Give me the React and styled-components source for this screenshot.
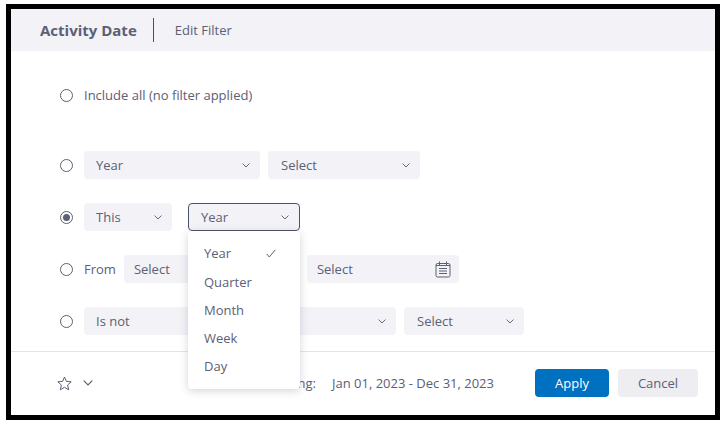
import React from "react";
import styled, { createGlobalStyle } from "styled-components";

const GlobalStyle = createGlobalStyle`
  html, body {
    margin: 0;
    padding: 0;
    background: #fff;
  }
  * {
    box-sizing: border-box;
  }
`;

const Frame = styled.div`
  position: relative;
  width: 714px;
  height: 416px;
  margin: 4px 0 0 6px;
  border: 5px solid #000;
  background: #fff;
  font-family: "Open Sans", "Noto Sans", sans-serif;
  font-size: 13px;
  color: #5c6075;
`;

const Header = styled.div`
  display: flex;
  align-items: center;
  height: 42px;
  padding-left: 29px;
  background: #f2f2f7;
`;

const Title = styled.div`
  font-size: 15px;
  font-weight: 700;
  padding-right: 16px;
  border-right: 1px solid #4a4e63;
  height: 24px;
  line-height: 24px;
`;

const SubTitle = styled.div`
  font-size: 13px;
  margin-left: 21px;
`;

const Body = styled.div`
  height: 301px;
  padding: 30px 0 0 49px;
  border-bottom: 1px solid #e4e4e8;
  display: flex;
  flex-direction: column;
  gap: 24px;
`;

const Row = styled.div`
  display: flex;
  align-items: center;
  height: 28px;
  gap: ${(p) => p.$gap || 8}px;
  margin-bottom: ${(p) => p.$after || 0}px;
`;

const Radio = styled.span`
  display: flex;
  align-items: center;
  justify-content: center;
  width: 13px;
  height: 13px;
  margin-right: 3px;
  border: 1px solid #5c6075;
  border-radius: 50%;
  background: #fff;
  flex: none;

  &::after {
    content: "";
    display: ${(p) => (p.$on ? "block" : "none")};
    width: 7px;
    height: 7px;
    border-radius: 50%;
    background: #5c6075;
  }
`;

const Label = styled.span`
  white-space: nowrap;
`;

const SelectBox = styled.div`
  display: flex;
  align-items: center;
  justify-content: space-between;
  width: ${(p) => p.$w}px;
  height: 28px;
  padding: 0 ${(p) => p.$right || 10}px 0 ${(p) => p.$left || 12}px;
  background: #f2f2f7;
  border-radius: 4px;
  border: ${(p) => (p.$open ? "1px solid #4f5368" : "none")};
  flex: none;
`;

const Menu = styled.ul`
  position: absolute;
  left: 177px;
  top: 222px;
  width: 112px;
  height: 158px;
  margin: 0;
  padding: 8px 0;
  list-style: none;
  background: #fff;
  border-radius: 4px;
  box-shadow: 0 2px 8px rgba(60, 64, 90, 0.22);
  z-index: 2;
`;

const MenuItem = styled.li`
  display: flex;
  align-items: center;
  justify-content: space-between;
  height: 28px;
  padding: 0 24px 0 16px;

  &:first-child {
    margin-bottom: 1px;
  }
`;

const Footer = styled.div`
  display: flex;
  align-items: center;
  height: 62px;
  padding: 0 17px 0 46px;
`;

const FavGroup = styled.div`
  display: flex;
  align-items: center;
  gap: 11px;
`;

const Range = styled.div`
  display: flex;
  gap: 16px;
  margin-left: auto;
  margin-right: 41px;
`;

const Button = styled.button`
  height: 28px;
  width: ${(p) => p.$w}px;
  margin-left: ${(p) => p.$ml || 0}px;
  border: none;
  border-radius: 4px;
  font-family: inherit;
  font-size: 13px;
  background: ${(p) => (p.$primary ? "#0070c0" : "#ededf2")};
  color: ${(p) => (p.$primary ? "#fff" : "#5c6075")};
`;

const Chevron = ({ size = 8 }) => (
  <svg width={size} height={size * 0.6} viewBox="0 0 10 6" fill="none" stroke="#5c6075" strokeWidth="1.2">
    <path d="M0.7 0.7 L5 5 L9.3 0.7" />
  </svg>
);

const Check = () => (
  <svg width="10" height="9" viewBox="0 0 10 9" fill="none" stroke="#5c6075" strokeWidth="1">
    <path d="M0.8 5 L3.3 8 L9.2 0.8" />
  </svg>
);

const Calendar = () => (
  <svg width="16" height="17" viewBox="0 0 16 17" fill="none" stroke="#5c6075" strokeWidth="1">
    <rect x="1" y="2.5" width="14" height="13.5" rx="1.5" />
    <path d="M4.5 0.5 V4 M11.5 0.5 V4 M1 4.5 H15 M4 7.5 H12 M4 10 H12 M4 12.5 H12" />
  </svg>
);

const Star = () => (
  <svg width="15" height="15" viewBox="0 0 15 15" fill="none" stroke="#5c6075" strokeWidth="1">
    <path d="M7.5 1 L9.4 5.4 L14.2 5.8 L10.6 9 L11.7 13.8 L7.5 11.3 L3.3 13.8 L4.4 9 L0.8 5.8 L5.6 5.4 Z" />
  </svg>
);

const periods = ["Year", "Quarter", "Month", "Week", "Day"];

const App = () => {
  return (
    <>
      <GlobalStyle />
      <Frame>
        <Header>
          <Title>Activity Date</Title>
          <SubTitle>Edit Filter</SubTitle>
        </Header>
        <Body>
          <Row $after={18}>
            <Radio />
            <Label>Include all (no filter applied)</Label>
          </Row>
          <Row>
            <Radio />
            <SelectBox $w={176} $right={10}>
              Year <Chevron />
            </SelectBox>
            <SelectBox $w={152} $left={13}>
              Select <Chevron />
            </SelectBox>
          </Row>
          <Row $gap={16}>
            <Row>
              <Radio $on />
              <SelectBox $w={88}>
                This <Chevron />
              </SelectBox>
            </Row>
            <SelectBox $w={112} $open>
              Year <Chevron />
            </SelectBox>
          </Row>
          <Row>
            <Radio />
            <Label>From</Label>
            <SelectBox $w={175} $left={10} $right={8}>
              Select <Calendar />
            </SelectBox>
            <SelectBox $w={152} $left={10} $right={8}>
              Select <Calendar />
            </SelectBox>
          </Row>
          <Row>
            <Radio />
            <SelectBox $w={176}>
              Is not <Chevron />
            </SelectBox>
            <SelectBox $w={128} $right={10}>
              <span />
              <Chevron />
            </SelectBox>
            <SelectBox $w={120} $left={13}>
              Select <Chevron />
            </SelectBox>
          </Row>
        </Body>
        <Footer>
          <FavGroup>
            <Star />
            <Chevron size={10} />
          </FavGroup>
          <Range>
            <span>Showing:</span>
            <span>Jan 01, 2023 - Dec 31, 2023</span>
          </Range>
          <Button $primary $w={74}>
            Apply
          </Button>
          <Button $w={80} $ml={9}>
            Cancel
          </Button>
        </Footer>
        <Menu>
          {periods.map((period) => (
            <MenuItem key={period}>
              {period}
              {period === "Year" && <Check />}
            </MenuItem>
          ))}
        </Menu>
      </Frame>
    </>
  );
};

export default App;
